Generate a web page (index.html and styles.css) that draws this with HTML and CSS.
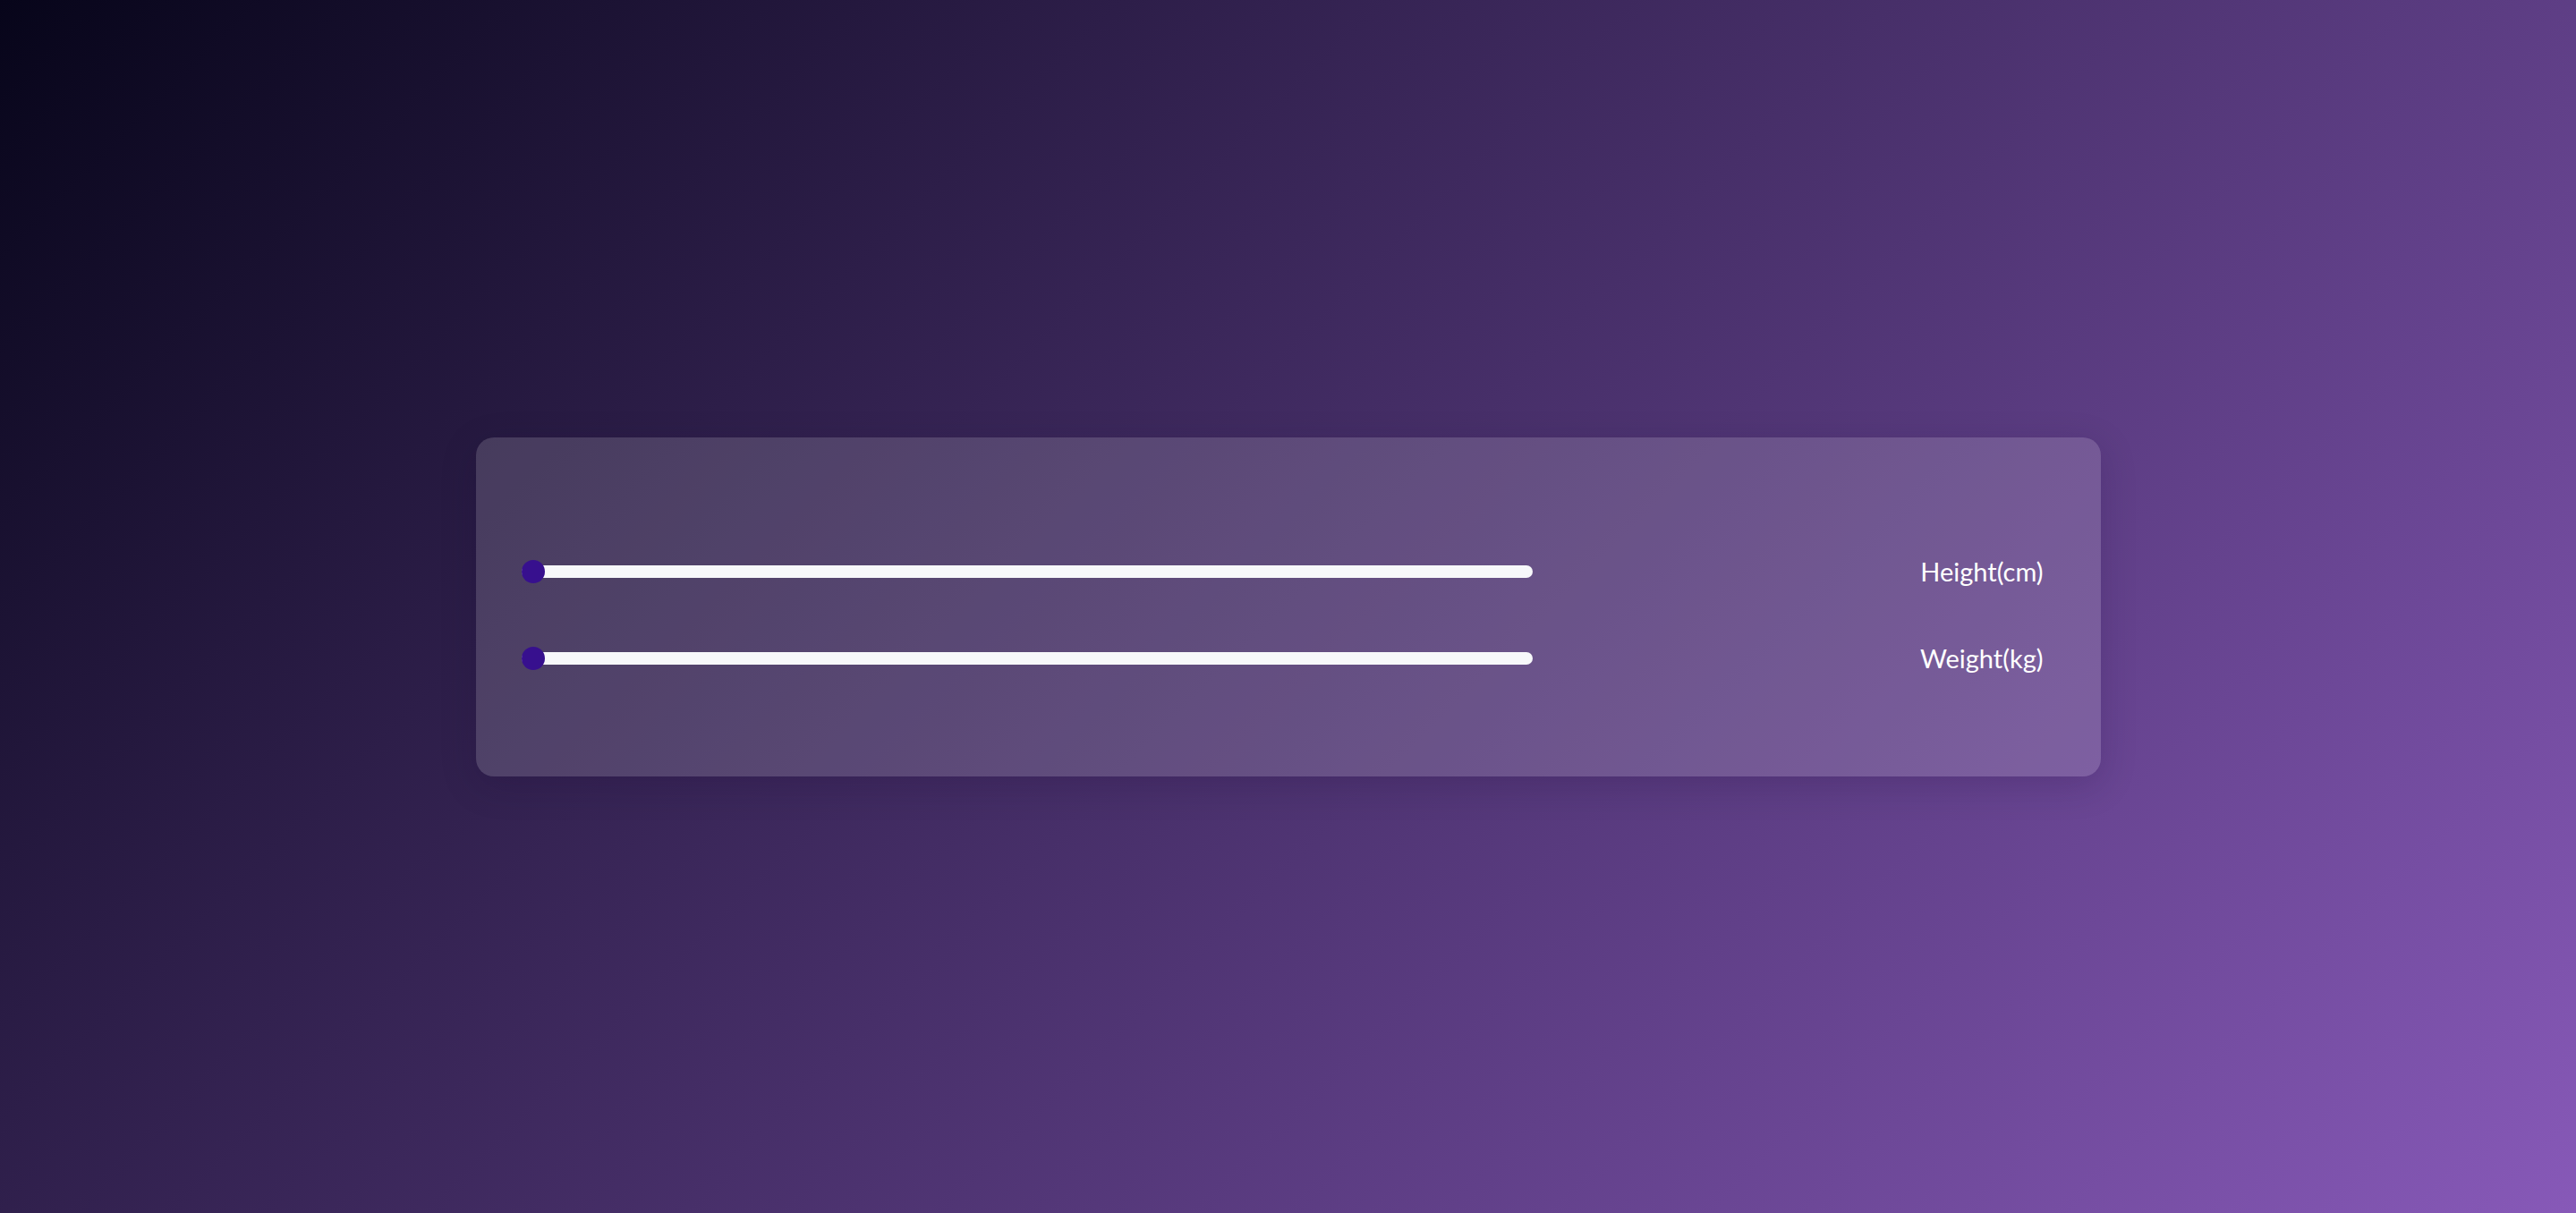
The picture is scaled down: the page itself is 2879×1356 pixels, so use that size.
FILE: index.html
```html
<!DOCTYPE html>
<html lang="en">
<head>
<meta charset="utf-8">
<title>BMI</title>
<link rel="stylesheet" href="styles.css">
</head>
<body>
  <main class="card">
    <div class="row">
      <div class="slider">
        <div class="track"></div>
        <div class="thumb"></div>
      </div>
      <label class="label">Height(cm)</label>
    </div>
    <div class="row">
      <div class="slider">
        <div class="track"></div>
        <div class="thumb"></div>
      </div>
      <label class="label">Weight(kg)</label>
    </div>
  </main>
</body>
</html>
```

FILE: styles.css
```css
html, body {
  margin: 0;
  padding: 0;
}

body {
  width: 100vw;
  height: 100vh;
  display: flex;
  align-items: center;
  justify-content: center;
  background: linear-gradient(135deg, #07051a 0%, #8759b8 100%);
  font-family: Lato, "Open Sans", sans-serif;
  overflow: hidden;
}

.card {
  box-sizing: border-box;
  width: 1816px;
  height: 379px;
  padding: 130px 64px 112px 51px;
  border-radius: 20px;
  background: rgba(255, 255, 255, 0.15);
  box-shadow: 0 10px 40px rgba(20, 8, 50, 0.18);
  display: flex;
  flex-direction: column;
  gap: 57px;
}

.row {
  height: 40px;
  display: flex;
  align-items: center;
  justify-content: space-between;
}

.slider {
  position: relative;
  width: 1130px;
  height: 26px;
  display: flex;
  align-items: center;
}

.track {
  width: 100%;
  height: 14px;
  border-radius: 7px;
  background: #f7f8fa;
}

.thumb {
  position: absolute;
  left: 0;
  top: 0;
  width: 26px;
  height: 26px;
  border-radius: 50%;
  background: #37108e;
}

.label {
  color: #ffffff;
  font-size: 29px;
  line-height: 40px;
  text-align: right;
}
```
